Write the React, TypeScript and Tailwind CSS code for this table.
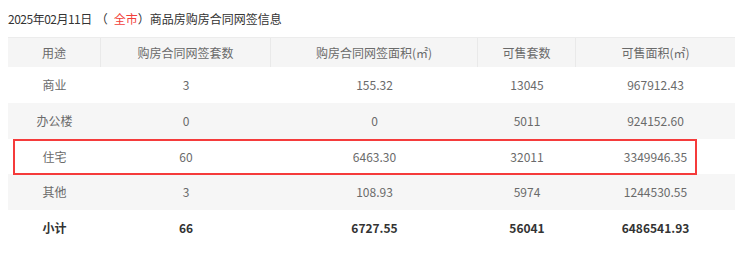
import React from "react";

const cols = "grid grid-cols-[93px_170px_207px_98px_159px]";

const rows: { name: string; v: string[]; bg: boolean }[] = [
  { name: "商业", v: ["3", "155.32", "13045", "967912.43"], bg: false },
  { name: "办公楼", v: ["0", "0", "5011", "924152.60"], bg: true },
  { name: "住宅", v: ["60", "6463.30", "32011", "3349946.35"], bg: false },
  { name: "其他", v: ["3", "108.93", "5974", "1244530.55"], bg: true },
];

export default function App() {
  return (
    <div
      className="w-[740px] h-[254px] bg-white text-[12px] text-[#6a6a6a]"
      style={{ fontFamily: '"Noto Sans CJK SC", "Noto Sans", sans-serif' }}
    >
      <div className="flex items-center h-[37px] pl-[8px] text-[12px] text-[#333]">
        <span className="tracking-[-0.5px]">2025年02月11日</span>
        <span className="ml-[4px]">（</span>
        <span className="ml-[6px] text-[#f2403a]">全市</span>
        <span>）商品房购房合同网签信息</span>
      </div>
      <div className="relative ml-[8px] w-[727px]">
        <div className={`${cols} h-[30px] bg-[#f5f5f5] border-t border-[#ececec]`}>
          {["用途", "购房合同网签套数", "购房合同网签面积(㎡)", "可售套数", "可售面积(㎡)"].map((h, i) => (
            <div
              key={h}
              className={`flex items-center justify-center ${i < 4 ? "border-r border-[#e9e9e9]" : ""}`}
            >
              {h}
            </div>
          ))}
        </div>
        {rows.map((r, idx) => (
          <div
            key={r.name}
            className={`${cols} ${idx === 2 ? "h-[35px]" : "h-[36px]"} ${r.bg ? "bg-[#f6f6f6]" : "bg-white"}`}
          >
            <div className="flex items-center justify-center">{r.name}</div>
            {r.v.map((x, i) => (
              <div key={i} className="flex items-center justify-center">
                {x}
              </div>
            ))}
          </div>
        ))}
        <div className={`${cols} h-[36px] font-bold text-[#333]`}>
          {["小计", "66", "6727.55", "56041", "6486541.93"].map((x, i) => (
            <div key={i} className="flex items-center justify-center">
              {x}
            </div>
          ))}
        </div>
        <div className="absolute left-[5px] top-[102px] w-[684px] h-[36px] border-2 border-[#f53b3b] pointer-events-none" />
      </div>
    </div>
  );
}
